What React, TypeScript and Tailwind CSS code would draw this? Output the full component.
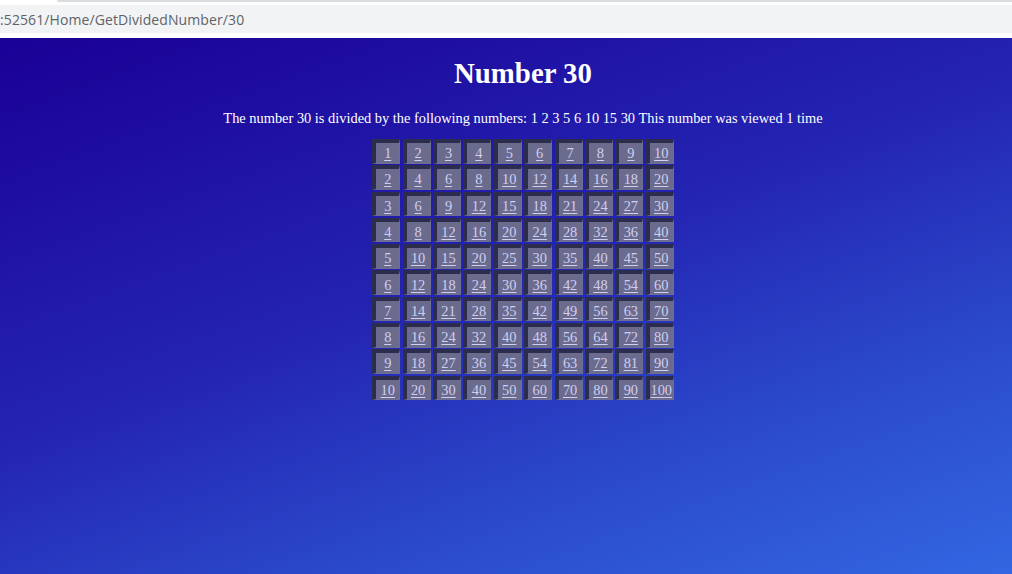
import React from "react";

const divisors = [1, 2, 3, 5, 6, 10, 15, 30];

function AddressBar() {
  return (
    <div className="relative h-[38px] w-full bg-white">
      <div className="absolute right-0 top-0 h-[2px] w-[955px] rounded-bl-[4px] bg-[#dadce0]" />
      <div className="absolute inset-x-0 top-[5px] flex h-[28px] items-center bg-[#f1f3f4]">
        <span className="font-['Open_Sans',sans-serif] text-[14px] tracking-[0.1px] text-[#5f6368]">
          :52561/Home/GetDividedNumber/30
        </span>
      </div>
    </div>
  );
}

function Cell({ value }: { value: number }) {
  return (
    <div className="flex h-[24.5px] w-[28px] items-center justify-center border-t-[4px] border-l-[4px] border-r-[1px] border-b-[1px] border-t-[#2c2c4c] border-l-[#2c2c4c] border-r-[#6e6e90] border-b-[#6e6e90] bg-[#6b6b8d] pt-[1px]">
      <a href="#" className="text-[14.4px] leading-none text-[#cfcff2] underline underline-offset-[2px]">
        {value}
      </a>
    </div>
  );
}

export default function App() {
  const rows = Array.from({ length: 10 }, (_, i) => i + 1);

  return (
    <div className="flex h-[574px] w-[1012px] flex-col overflow-hidden font-['Liberation_Serif',serif]">
      <AddressBar />
      <main className="flex flex-1 flex-col items-center bg-[linear-gradient(160deg,#1a0096_0%,#2424b2_45%,#2b4ccd_75%,#3366e2_100%)] pl-[34px] text-white">
        <h1 className="mt-[19px] text-[28.8px] font-bold leading-[33px]">Number 30</h1>
        <p className="mt-[20px] text-[14.4px] leading-[17px]">
          The number 30 is divided by the following numbers: {divisors.join(" ")} This number was
          viewed 1 time
        </p>
        <div className="mt-[12px] flex flex-col gap-[1.8px]">
          {rows.map((r) => (
            <div key={r} className="flex gap-[2.4px]">
              {rows.map((c) => (
                <Cell key={c} value={r * c} />
              ))}
            </div>
          ))}
        </div>
      </main>
    </div>
  );
}
